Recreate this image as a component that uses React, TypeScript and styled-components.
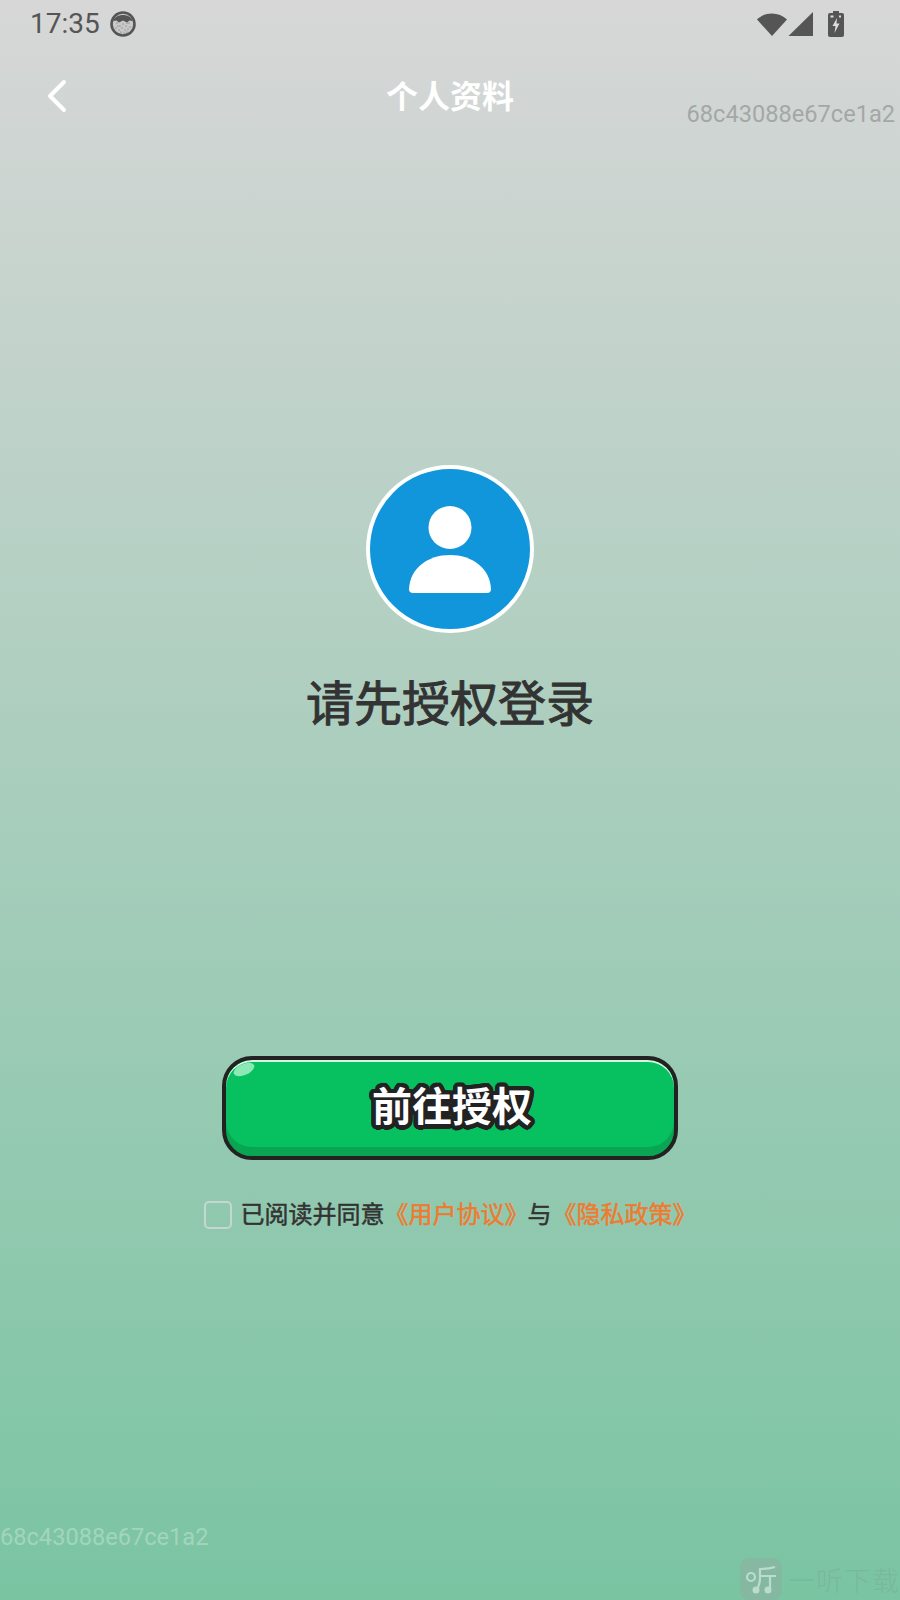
import React from "react";
import styled, { createGlobalStyle } from "styled-components";

const GlobalStyle = createGlobalStyle`
  html, body {
    margin: 0;
    padding: 0;
  }
  body {
    font-family: "Roboto", "Noto Sans CJK SC", sans-serif;
  }
`;

const Page = styled.div`
  position: relative;
  width: 900px;
  height: 1600px;
  overflow: hidden;
  display: flex;
  flex-direction: column;
  background: linear-gradient(180deg, #d7d7d7 0%, #7ac4a2 100%);
`;

const StatusBar = styled.div`
  height: 48px;
  padding: 0 56px 0 30px;
  display: flex;
  align-items: center;
  justify-content: space-between;
  color: #555;
`;

const StatusLeft = styled.div`
  display: flex;
  align-items: center;
  gap: 10px;
`;

const Time = styled.span`
  font-family: "Roboto", sans-serif;
  font-size: 28px;
  line-height: 48px;
  color: #555;
`;

const StatusRight = styled.div`
  display: flex;
  align-items: center;
  gap: 0;
`;

const BatterySlot = styled.span`
  margin-left: 14px;
  display: flex;
`;

const NavBar = styled.div`
  height: 96px;
  position: relative;
  display: flex;
  align-items: center;
  justify-content: center;
`;

const BackButton = styled.div`
  position: absolute;
  left: 46px;
  top: 30px;
  width: 24px;
  height: 36px;
`;

const NavTitle = styled.h1`
  margin: 0 0 4px;
  font-family: "Noto Sans CJK SC", sans-serif;
  font-size: 32px;
  font-weight: 700;
  line-height: 44px;
  color: #fff;
`;

const Main = styled.div`
  display: flex;
  flex-direction: column;
  align-items: center;
  padding-top: 321px;
`;

const Avatar = styled.div`
  box-sizing: border-box;
  width: 168px;
  height: 168px;
  border: 4px solid #fff;
  border-radius: 50%;
  background: #1296db;
  display: flex;
  align-items: center;
  justify-content: center;
`;

const Prompt = styled.h2`
  margin: 32px 0 0;
  font-family: "Noto Sans CJK SC", sans-serif;
  font-size: 48px;
  font-weight: 400;
  line-height: 70px;
  color: #333;
  -webkit-text-stroke: 1px #333;
`;

// round outline round the label
const outline = Array.from({ length: 24 }, (_, i) => {
  const a = (i / 24) * Math.PI * 2;
  return `${(Math.cos(a) * 4.5).toFixed(2)}px ${(Math.sin(a) * 4.5).toFixed(2)}px 0 #222`;
}).join(", ");

const GrantButton = styled.button`
  box-sizing: border-box;
  margin-top: 321px;
  width: 456px;
  height: 104px;
  padding: 0 0 8px 4px;
  position: relative;
  border: 4px solid #222;
  border-radius: 30px;
  background: #07c160;
  box-shadow: inset 0 -9px 0 #0aa553, inset 0 2px 0 #d8f5e4;
  display: flex;
  align-items: center;
  justify-content: center;
  font-family: "Noto Sans CJK SC", sans-serif;
  font-size: 40px;
  font-weight: 700;
  color: #fff;
  text-shadow: ${outline};
`;

const Gloss = styled.span`
  position: absolute;
  left: 7px;
  top: 4px;
  width: 22px;
  height: 11px;
  border-radius: 50%;
  background: #8ce8b4;
  transform: rotate(-24deg);
`;

const Agreement = styled.div`
  margin-top: 37px;
  display: flex;
  align-items: center;
  font-family: "Noto Sans CJK SC", sans-serif;
  font-size: 24px;
  font-weight: 400;
  line-height: 32px;
  color: #333;
  -webkit-text-stroke: 0.5px currentColor;
`;

const CheckBox = styled.span`
  box-sizing: border-box;
  width: 28px;
  height: 28px;
  margin: 4px 9px 0 0;
  border: 2px solid #c4d8cf;
  border-radius: 5px;
`;

const TextLink = styled.span`
  color: #ee7b30;
`;

const Joiner = styled.span`
  margin: 0 1px 0 -1px;
`;

const Watermark = styled.span<{ $corner: "top" | "bottom" }>`
  position: absolute;
  font-family: "Roboto", sans-serif;
  font-size: 23.6px;
  line-height: 28px;
  white-space: nowrap;
  ${(p) =>
    p.$corner === "top"
      ? "right: 5px; top: 100px; color: #a3a8a6;"
      : "left: 0; top: 1523px; color: rgba(255, 255, 255, 0.3);"}
`;

const Brand = styled.div`
  position: absolute;
  left: 740px;
  top: 1558px;
  display: flex;
  gap: 6px;
  align-items: center;
`;

const BrandBadge = styled.span`
  width: 42px;
  height: 42px;
  border-radius: 9px;
  background: rgba(150, 165, 160, 0.38);
  display: flex;
  align-items: center;
  justify-content: center;
`;

const BrandName = styled.span`
  font-family: "Noto Sans CJK SC", sans-serif;
  font-size: 27px;
  font-weight: 300;
  letter-spacing: 1px;
  color: rgba(120, 150, 140, 0.28);
`;

const freckles = [
  [7, 12], [10, 15], [13, 13], [16, 15], [19, 12], [6, 17], [9, 19], [12, 17],
  [15, 19], [18, 18], [20, 16], [11, 21], [14, 22], [17, 21], [8, 15], [17, 12],
];

const CatIcon = () => (
  <svg width="26" height="26" viewBox="0 0 26 26">
    <circle cx="13" cy="13" r="11.5" fill="#c9c9c9" stroke="#555" strokeWidth="2.6" />
    <path d="M3 10 C6 2 20 2 23 10 L19.5 9.5 L17 11.5 L13 9.5 L9 11.5 L6.5 9.5 Z" fill="#555" />
    {freckles.map(([x, y]) => (
      <circle key={`${x}-${y}`} cx={x} cy={y} r="0.6" fill="#666" />
    ))}
  </svg>
);

const WifiIcon = () => (
  <svg width="32" height="26" viewBox="0 0 32 26">
    <path d="M1 8.5 C9 0.5 23 0.5 31 8.5 L16 25 Z" fill="#555" />
  </svg>
);

const SignalIcon = () => (
  <svg width="26" height="26" viewBox="0 0 26 26">
    <path d="M0.5 25 L25 1 L25 25 Z" fill="#555" />
  </svg>
);

const BatteryIcon = () => (
  <svg width="16" height="26" viewBox="0 0 16 26">
    <path d="M5 0 H11 V2 H14 Q16 2 16 4 V24 Q16 26 14 26 H2 Q0 26 0 24 V4 Q0 2 2 2 H5 Z" fill="#555" />
    <path d="M9 7 L4.5 15 H7.5 L6.5 22 L11.5 12.5 H8.5 Z" fill="#ddd" />
    <rect x="2.5" y="4.5" width="3" height="2" fill="#ddd" />
    <rect x="11" y="4.5" width="2" height="2" fill="#ddd" />
  </svg>
);

const BackIcon = () => (
  <svg width="24" height="36" viewBox="0 0 24 36">
    <path
      d="M18 4 L4 18 L18 32"
      fill="none"
      stroke="#fff"
      strokeWidth="4"
      strokeLinecap="round"
      strokeLinejoin="round"
    />
  </svg>
);

const PersonIcon = () => (
  <svg width="84" height="90" viewBox="0 0 84 90">
    <circle cx="42" cy="23.5" r="21.5" fill="#fff" />
    <path
      d="M1 85 C2 64 20 51 42 51 C64 51 82 64 83 85 Q83 89 79 89 H5 Q1 89 1 85 Z"
      fill="#fff"
    />
  </svg>
);

const BrandLogo = () => (
  <svg width="34" height="34" viewBox="0 0 34 34" fill="none" stroke="#b9dccd" strokeWidth="2.2">
    <circle cx="7" cy="15" r="4" />
    <path d="M31 5 C25 7 21 7 16 7 V15 C16 20 15 24 13 27" />
    <path d="M16 14 H32 M26 14 V27" />
    <circle cx="12" cy="28" r="2.4" fill="#b9dccd" />
    <circle cx="24" cy="28" r="2.4" fill="#b9dccd" />
  </svg>
);

export default function App() {
  return (
    <Page>
      <GlobalStyle />
      <StatusBar>
        <StatusLeft>
          <Time>17:35</Time>
          <CatIcon />
        </StatusLeft>
        <StatusRight>
          <WifiIcon />
          <SignalIcon />
          <BatterySlot>
            <BatteryIcon />
          </BatterySlot>
        </StatusRight>
      </StatusBar>
      <NavBar>
        <BackButton>
          <BackIcon />
        </BackButton>
        <NavTitle>个人资料</NavTitle>
      </NavBar>
      <Main>
        <Avatar>
          <PersonIcon />
        </Avatar>
        <Prompt>请先授权登录</Prompt>
        <GrantButton>
          <Gloss />
          前往授权
        </GrantButton>
        <Agreement>
          <CheckBox />
          已阅读并同意
          <TextLink>《用户协议》</TextLink>
          <Joiner>与</Joiner>
          <TextLink>《隐私政策》</TextLink>
        </Agreement>
      </Main>
      <Watermark $corner="top">68c43088e67ce1a2</Watermark>
      <Watermark $corner="bottom">68c43088e67ce1a2</Watermark>
      <Brand>
        <BrandBadge>
          <BrandLogo />
        </BrandBadge>
        <BrandName>一听下载</BrandName>
      </Brand>
    </Page>
  );
}
